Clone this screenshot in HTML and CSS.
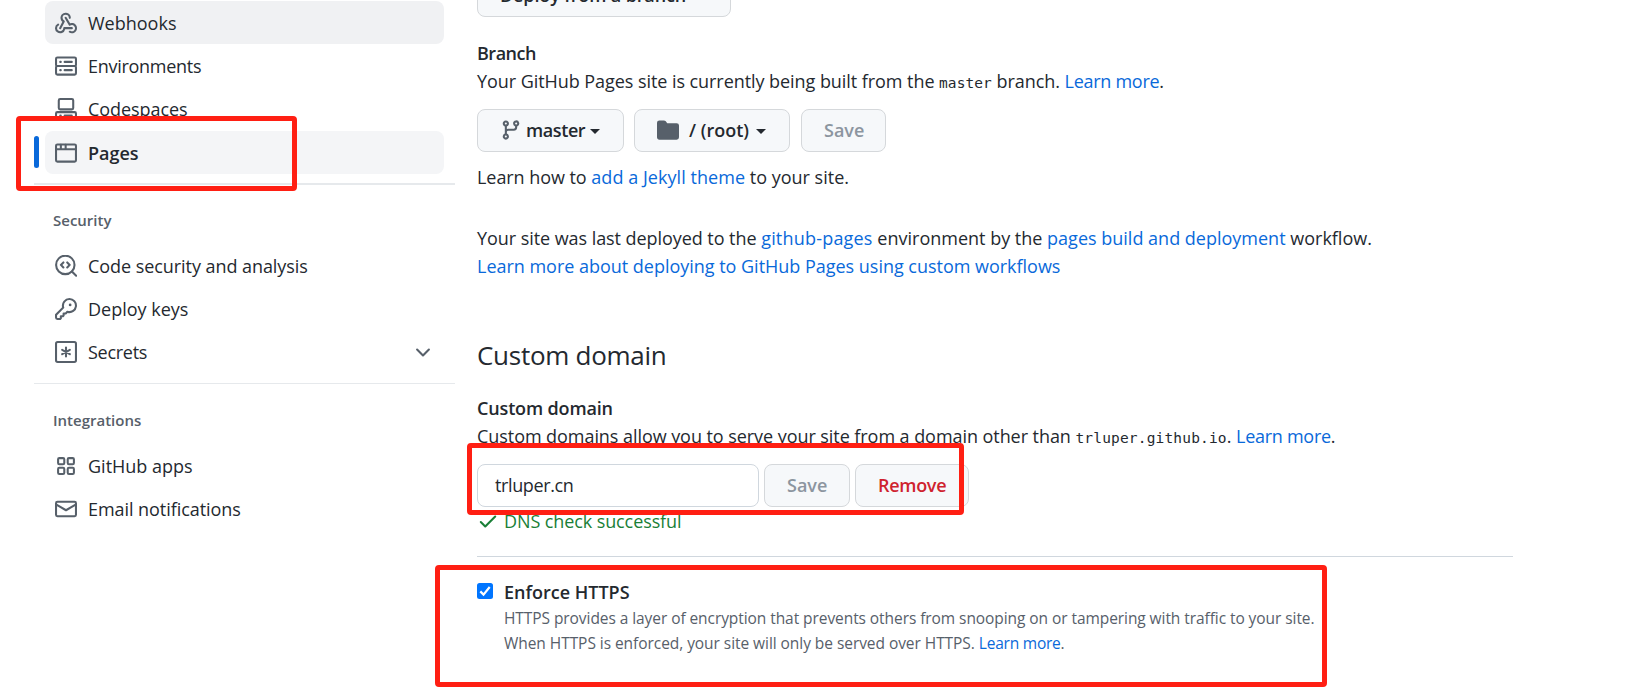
FILE: index.html
```html
<!DOCTYPE html>
<html lang="en">
<head>
<meta charset="utf-8">
<title>GitHub Pages settings</title>
<link rel="stylesheet" href="styles.css">
</head>
<body>
<div class="page">
  <nav class="sidebar">
    <a class="item item-hover"><svg class="icon" viewBox="0 0 16 16"><path d="M5.5 4.25a2.25 2.25 0 0 1 4.5 0 .75.75 0 0 0 1.5 0 3.75 3.75 0 1 0-6.14 2.889l-2.272 4.258a.75.75 0 0 0 1.324.706L7 7.25a.75.75 0 0 0-.309-1.015A2.25 2.25 0 0 1 5.5 4.25Z"/><path d="M7.364 3.607a.75.75 0 0 1 1.03.257l2.608 4.349a3.75 3.75 0 1 1-.628 6.785.75.75 0 0 1 .752-1.299 2.25 2.25 0 1 0-.033-3.88.75.75 0 0 1-1.03-.256L7.107 4.636a.75.75 0 0 1 .257-1.03Z"/><path d="M2.9 8.776A.75.75 0 0 1 2.625 9.8 2.25 2.25 0 1 0 6 11.75a.75.75 0 0 1 .75-.751h5.5a.75.75 0 0 1 0 1.5H7.425a3.751 3.751 0 1 1-5.55-3.998.75.75 0 0 1 1.024.274Z"/></svg><span>Webhooks</span></a>
    <a class="item"><svg class="icon line" viewBox="0 0 16 16"><rect x=".75" y="1.75" width="14.5" height="6.25" rx="1"/><rect x=".75" y="8" width="14.5" height="6.25" rx="1"/><path d="M3.8 5h.4M7 5h5.2M3.8 11h.4M7 11h5.2"/></svg><span class="tight">Environments</span></a>
    <a class="item"><svg class="icon line" viewBox="0 0 16 16"><rect x="2.75" y=".75" width="10.5" height="7.5" rx="1"/><rect x=".75" y="10.25" width="14.5" height="5" rx="1"/><path d="M3.8 12.75h.4M7 12.75h5.2"/></svg><span class="snug">Codespaces</span></a>
    <a class="item item-current"><svg class="icon line" viewBox="0 0 16 16"><rect x=".75" y="1.75" width="14.5" height="12.5" rx="1"/><path d="M.75 5.25h14.5M4.25 2v3M7.75 2v3"/></svg><span>Pages</span></a>
    <hr class="divider divider-strong">
    <h3 class="group">Security</h3>
    <a class="item"><svg class="icon line" viewBox="0 0 16 16"><circle cx="7.5" cy="7.2" r="6.7"/><path d="m12.3 12 3.1 3.1M6.1 5.4 4.3 7.2l1.8 1.9M8.9 5.4l1.8 1.8-1.8 1.9"/></svg><span class="snug">Code security and analysis</span></a>
    <a class="item"><svg class="icon" viewBox="0 0 16 16"><path d="M10.5 0a5.499 5.499 0 1 1-1.288 10.848l-.932.932a.749.749 0 0 1-.53.22H7v.75a.749.749 0 0 1-.22.53l-.5.5a.749.749 0 0 1-.53.22H5v.75a.749.749 0 0 1-.22.53l-.5.5a.749.749 0 0 1-.53.22h-2A1.75 1.75 0 0 1 0 14.25v-2c0-.199.079-.389.22-.53l4.932-4.932A5.5 5.5 0 0 1 10.5 0Zm-4 5.5c-.001.431.069.86.205 1.269a.75.75 0 0 1-.181.768L1.5 12.56v1.69c0 .138.112.25.25.25h1.69l.06-.06v-1.19a.75.75 0 0 1 .75-.75h1.19l.06-.06v-1.19a.75.75 0 0 1 .75-.75h1.19l1.023-1.025a.75.75 0 0 1 .768-.18A4 4 0 1 0 6.5 5.5ZM11 6a1 1 0 1 1 0-2 1 1 0 0 1 0 2Z"/></svg><span>Deploy keys</span></a>
    <a class="item"><svg class="icon line" viewBox="0 0 16 16"><rect x=".75" y=".75" width="14.5" height="14.5" rx="1.2"/><path d="M8 4.8v6.4M5.2 6.4l5.6 3.2M10.8 6.4 5.2 9.6"/></svg><span class="tight">Secrets</span><svg class="icon chevron line" viewBox="0 0 16 16"><path d="m3.7 6.2 4.3 4.3 4.3-4.3"/></svg></a>
    <hr class="divider">
    <h3 class="group">Integrations</h3>
    <a class="item"><svg class="icon line" viewBox="0 0 16 16"><rect x="2.25" y="2.25" width="4.5" height="4.5" rx=".9"/><rect x="9.25" y="2.25" width="4.5" height="4.5" rx=".9"/><rect x="2.25" y="9.25" width="4.5" height="4.5" rx=".9"/><rect x="9.25" y="9.25" width="4.5" height="4.5" rx=".9"/></svg><span>GitHub apps</span></a>
    <a class="item"><svg class="icon line" viewBox="0 0 16 16"><rect x=".75" y="2.75" width="14.5" height="10.5" rx="1"/><path d="m1 4.8 7 4.1 7-4.1"/></svg><span class="snug">Email notifications</span></a>
  </nav>
  <main class="main">
    <button class="btn source"><span>Deploy from a branch</span></button>
    <h4 class="label branch">Branch</h4>
    <p class="text snug">Your GitHub Pages site is currently being built from the <code>master</code> branch. <a class="tight">Learn more</a>.</p>
    <div class="buttons">
      <button class="btn"><svg class="icon" viewBox="0 0 16 16"><path d="M9.5 3.25a2.25 2.25 0 1 1 3 2.122V6A2.5 2.5 0 0 1 10 8.5H6a1 1 0 0 0-1 1v1.128a2.251 2.251 0 1 1-1.5 0V5.372a2.25 2.25 0 1 1 1.5 0v1.836A2.493 2.493 0 0 1 6 7h4a1 1 0 0 0 1-1v-.628A2.25 2.25 0 0 1 9.5 3.25Zm-6 0a.75.75 0 1 0 1.5 0 .75.75 0 0 0-1.5 0Zm8.25-.75a.75.75 0 1 0 0 1.5.75.75 0 0 0 0-1.5ZM4.25 12a.75.75 0 1 0 0 1.5.75.75 0 0 0 0-1.5Z"/></svg><span class="branch-name">master</span><i class="caret"></i></button>
      <button class="btn folder"><svg class="icon" viewBox="0 0 16 16"><path d="M1.75 1A1.75 1.75 0 0 0 0 2.75v10.5C0 14.216.784 15 1.75 15h12.5A1.75 1.75 0 0 0 16 13.25v-8.5A1.75 1.75 0 0 0 14.25 3H7.5a.25.25 0 0 1-.2-.1l-.9-1.2C6.07 1.26 5.55 1 5 1H1.75Z"/></svg><span>/ (root)</span><i class="caret"></i></button>
      <button class="btn save disabled"><span>Save</span></button>
    </div>
    <p class="text theme"><span class="snug">Learn how to</span> <a class="theme-link">add a Jekyll theme</a> <span>to your site.</span></p>
    <p class="text deployed"><span class="snug">Your site was last deployed to the</span> <a class="loose">github-pages</a> <span>environment by the</span> <a>pages build and deployment</a> <span>workflow.</span><br><a class="link-line">Learn more about deploying to GitHub Pages using custom workflows</a></p>
    <h2 class="heading">Custom domain</h2>
    <h4 class="label">Custom domain</h4>
    <p class="text snug">Custom domains allow you to serve your site from a domain other than <code class="host">trluper.github.io</code>. <a class="tight">Learn more</a>.</p>
    <div class="domain">
      <div class="input">trluper.cn</div>
      <button class="btn save disabled"><span>Save</span></button>
      <button class="btn remove"><span>Remove</span></button>
    </div>
    <p class="dns"><svg class="icon" viewBox="0 0 16 16"><path d="M13.78 4.22a.75.75 0 0 1 0 1.06l-7.25 7.25a.75.75 0 0 1-1.06 0L2.22 9.28a.75.75 0 0 1 1.06-1.06L6 10.94l6.72-6.72a.75.75 0 0 1 1.06 0Z"/></svg><span>DNS check successful</span></p>
    <hr class="rule">
    <div class="enforce">
      <svg class="checkbox" viewBox="0 0 16 16"><rect width="16" height="16" rx="2.5"/><path d="m3.3 8.4 3.2 3.2 6.2-7.6"/></svg>
      <div><h4 class="label">Enforce HTTPS</h4>
      <p class="note">HTTPS provides a layer of encryption that prevents others from snooping on or tampering with traffic to your site.<br><span class="note-line">When HTTPS is enforced, your site will only be served over HTTPS. <a>Learn more</a>.</span></p></div>
    </div>
  </main>
  <div class="mark mark-pages"></div>
  <div class="mark mark-domain"></div>
  <div class="mark mark-https"></div>
</div>
</body>
</html>
```
FILE: styles.css
```css
* { box-sizing: border-box; }
body { margin: 0; background: #fff; color: #24292f; font: 18px/28px "Open Sans", "Noto Sans", sans-serif; }
h2, h3, h4, p { margin: 0; }
hr { margin: 0; border: 0; }
a { color: #0969da; }
code { font: 14.5px/20px "DejaVu Sans Mono", monospace; letter-spacing: .08px; }
.page { position: relative; display: flex; height: 688px; overflow: hidden; }
.icon { width: 22px; height: 22px; flex: none; fill: #57606a; }
.line { fill: none; stroke: #57606a; stroke-width: 1.5; stroke-linecap: round; stroke-linejoin: round; }

/* Tracking adjustments */
.snug { letter-spacing: -.06px; }
.tight { letter-spacing: -.28px; }
.loose { letter-spacing: .2px; }
.theme-link { letter-spacing: .05px; }
.link-line { letter-spacing: -.02px; }
.host { letter-spacing: .17px; }

.sidebar { width: 455px; padding: 1px 0 0 34px; flex: none; }
.item { display: flex; align-items: center; gap: 11px; height: 43px; margin: 0 11px; padding: 0 10px; border-radius: 8px; color: #24292f; }
.item-hover { background: #f0f1f3; }
.item-current { position: relative; margin-top: 1px; background: #f4f5f7; font-weight: 600; }
.item-current::before { content: ""; position: absolute; left: -11px; top: 5px; width: 5px; height: 32px; border-radius: 3px; background: #0969da; }
.chevron { margin-left: auto; }
.divider { height: 1px; margin-top: 10px; background: #e6e9ec; }
.divider-strong { height: 2px; margin-top: 9px; }
.group { height: 60px; padding: 23px 0 0 19px; font-size: 15px; line-height: 26px; font-weight: 600; color: #57606a; }
.divider-strong + .group { height: 59px; padding-top: 22px; }

.main { width: 1036px; margin-left: 22px; }
.label { font-size: 18px; font-weight: 600; line-height: 28px; letter-spacing: -.15px; }
.btn { display: flex; align-items: center; height: 43px; padding: 0 22px 2px; border: 1px solid #d5d8db; border-radius: 8px; background: #f6f8fa; color: #24292f; font: 600 18px/28px "Open Sans", sans-serif; white-space: nowrap; }
.source { width: 254px; margin-top: -26px; letter-spacing: -.12px; }
.branch { margin-top: 22px; letter-spacing: -.5px; }
.buttons { display: flex; gap: 10px; margin-top: 14px; }
.buttons .btn:first-child { width: 147px; }
.buttons .btn:first-child .icon { margin-right: 4px; }
.branch-name { letter-spacing: -.4px; }
.folder { width: 156px; }
.folder .icon { margin: 1px 10px 0 0; }
.caret { margin: 3px 0 0 5px; border: 5.5px solid transparent; border-top-color: #24292f; border-bottom: 0; }
.folder .caret { margin-left: 7px; }
.save { width: 86px; }
.buttons .save { width: 85px; margin-left: 1px; }
.disabled { color: #8c959f; }
.theme { margin-top: 11px; }
.deployed { margin-top: 33px; }
.heading { margin: 55px 0 19px; font-size: 26px; line-height: 40px; font-weight: 400; letter-spacing: -.27px; }
.domain { display: flex; gap: 5px; margin-top: 14px; }
.input { width: 282px; height: 43px; padding: 6px 17px; border: 1px solid #d0d7de; border-radius: 8px; letter-spacing: -.38px; }
.remove { width: 114px; letter-spacing: -.3px; color: #cf222e; }
.dns { display: flex; align-items: center; gap: 5px; letter-spacing: -.1px; color: #1a7f37; }
.dns .icon { fill: #1a7f37; }
.rule { height: 1px; margin-top: 21px; background: #d0d7de; }
.enforce { display: flex; gap: 11px; padding-top: 21px; }
.checkbox { width: 16px; height: 16px; margin-top: 5px; fill: #0075ff; flex: none; }
.checkbox path { fill: none; stroke: #fff; stroke-width: 2.2; }
.enforce .label { letter-spacing: 0; }
.note { color: #57606a; font-size: 15.5px; line-height: 25px; letter-spacing: -.07px; white-space: nowrap; }
.note-line { letter-spacing: -.055px; }
.note-line a { letter-spacing: -.22px; }

/* Annotation frames drawn over the page */
.mark { position: absolute; border: 5px solid #ff1f13; border-radius: 4px; }
.mark-pages { left: 16px; top: 116px; width: 281px; height: 75px; }
.mark-domain { left: 467px; top: 443px; width: 497px; height: 72px; }
.mark-https { left: 435px; top: 565px; width: 892px; height: 122px; }
```
